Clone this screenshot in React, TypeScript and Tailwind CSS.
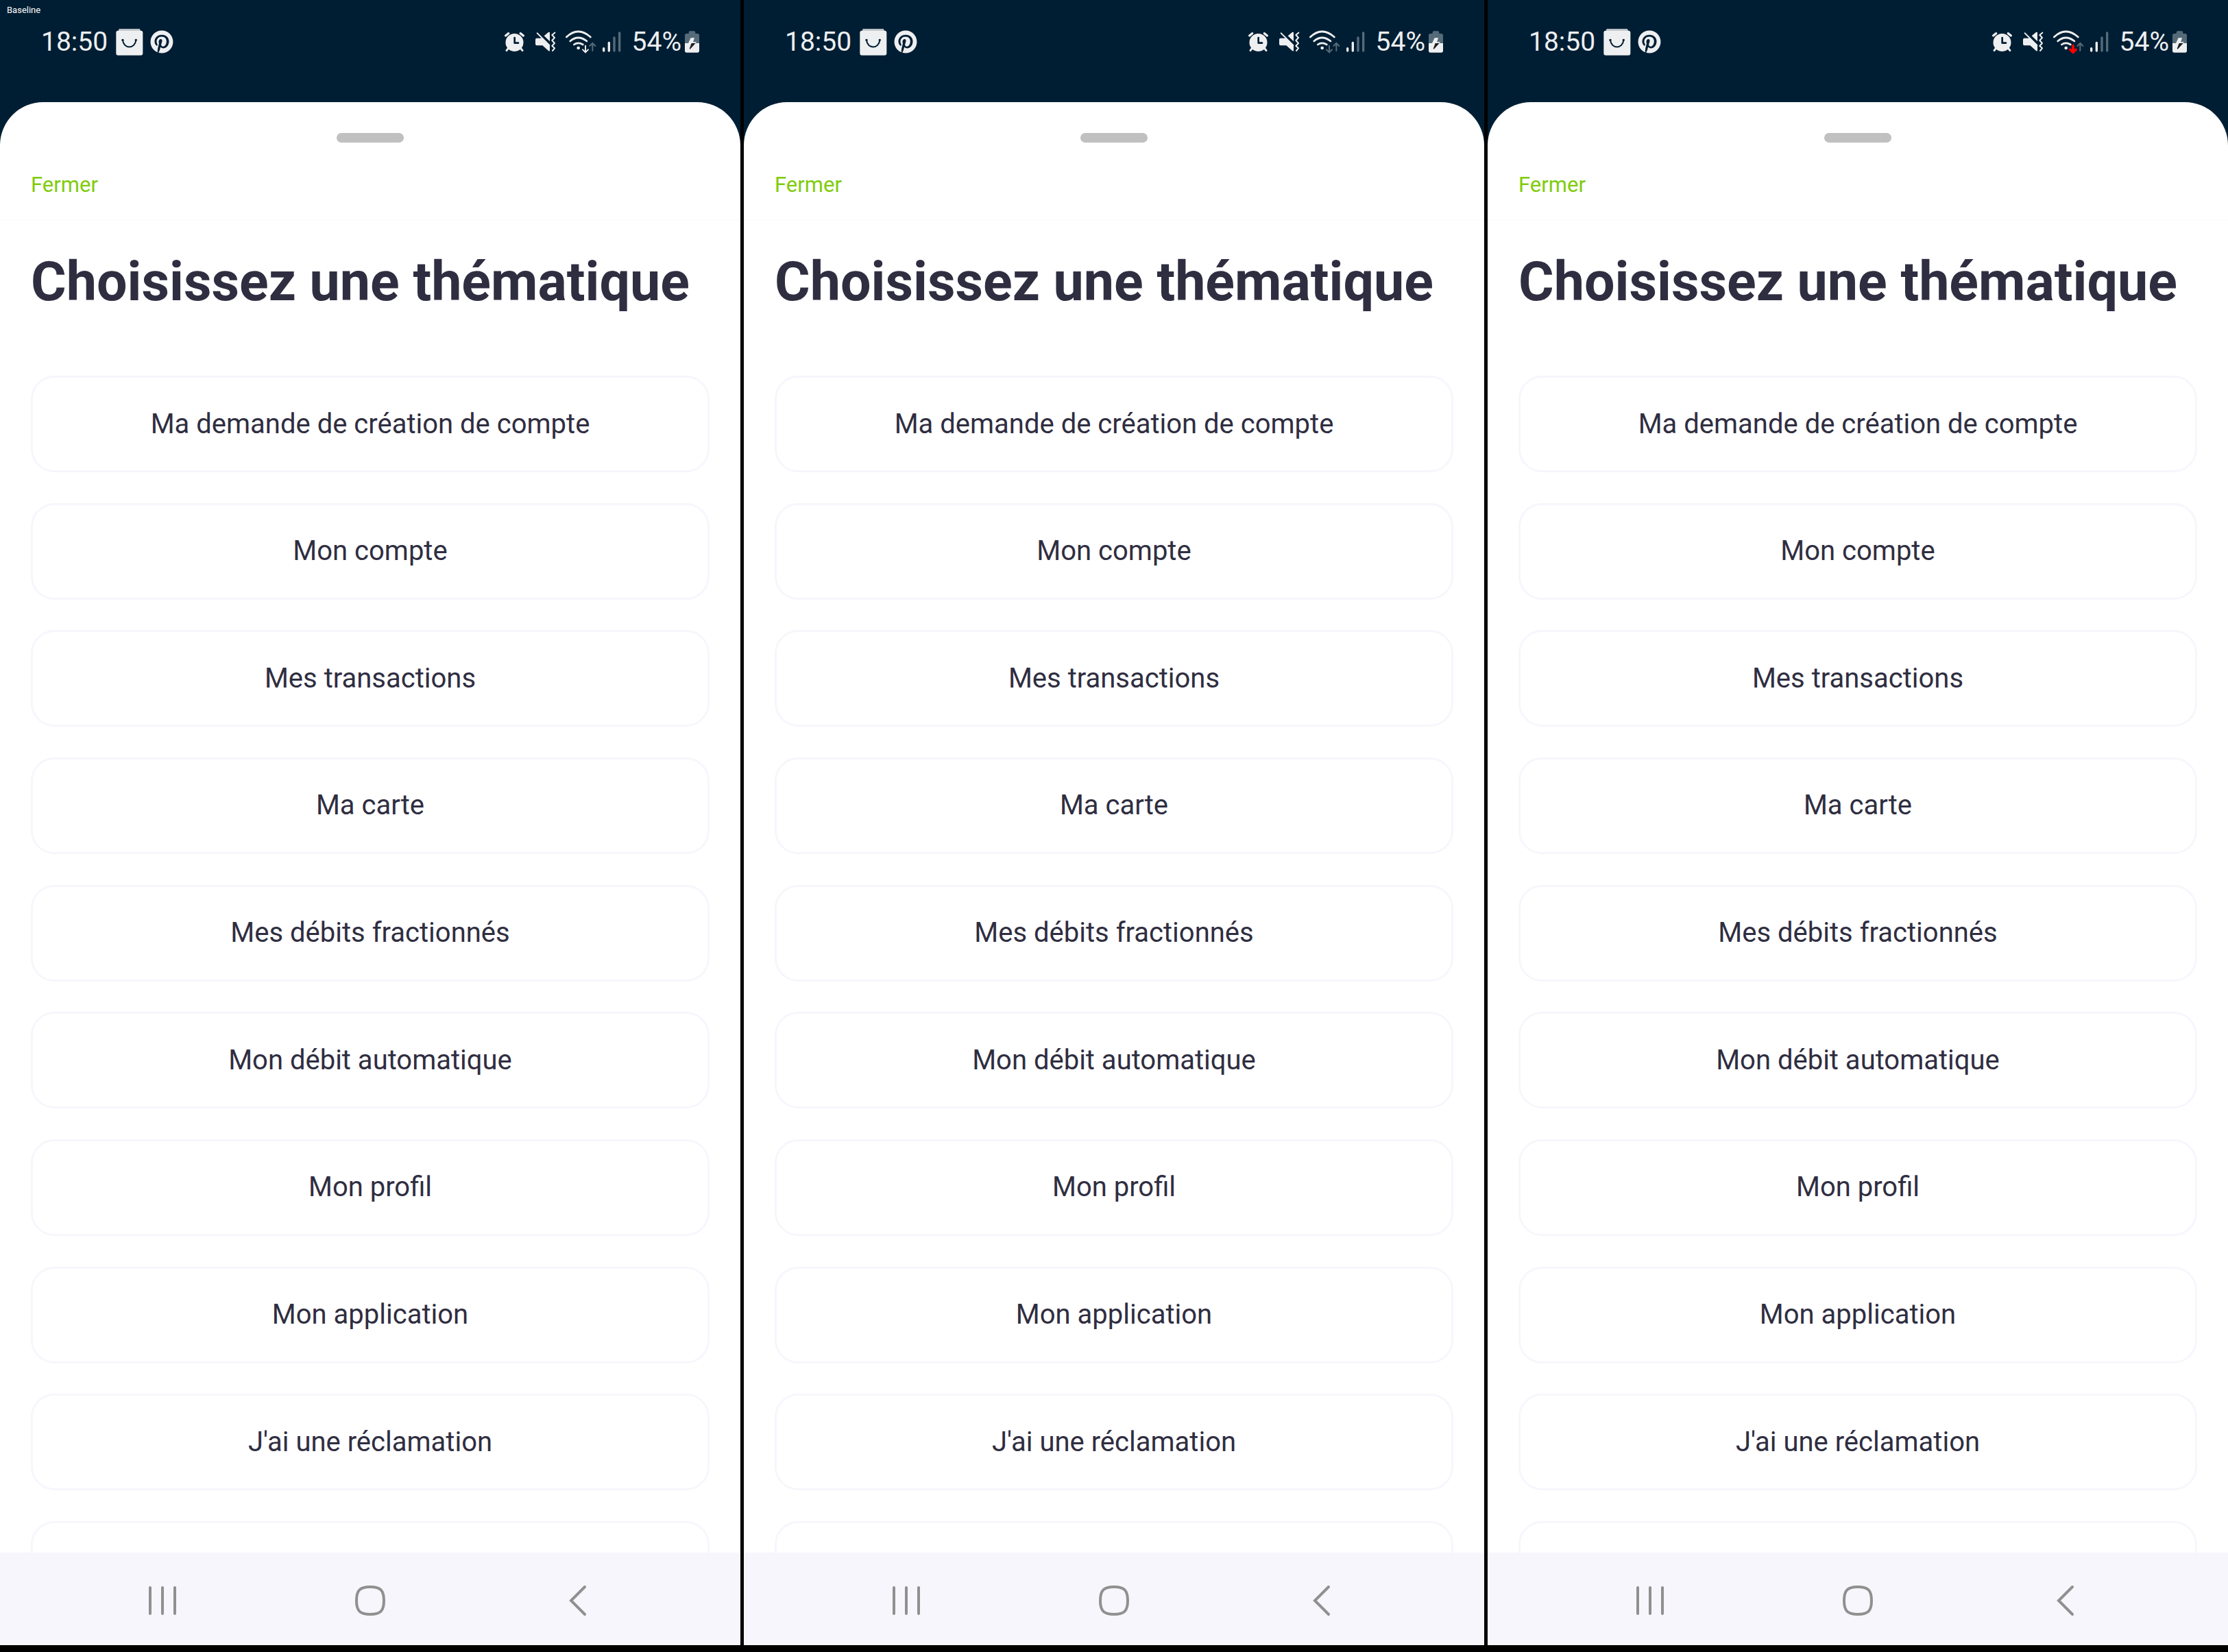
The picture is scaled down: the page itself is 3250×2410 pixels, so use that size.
import { FaPinterest } from "react-icons/fa";

const TOPICS = [
  "Ma demande de création de compte",
  "Mon compte",
  "Mes transactions",
  "Ma carte",
  "Mes débits fractionnés",
  "Mon débit automatique",
  "Mon profil",
  "Mon application",
  "J'ai une réclamation",
  "",
];

const INK = "#eeeff1";
const DIM = "#566b79";
const NAVY = "#001e33";

function BagIcon() {
  return (
    <svg className="h-10 w-10" viewBox="0 0 120 120" aria-hidden="true">
      <path d="M10 14 L14 3 H104 L110 14Z" fill="#b9c0c6" />
      <rect x="1" y="11" width="117" height="108" rx="9" fill={INK} />
      <path d="M30 53 C34 92 84 92 88 53" fill="none" stroke={NAVY} strokeWidth="6" />
      <circle cx="30" cy="52" r="5" fill={NAVY} />
      <circle cx="88" cy="52" r="5" fill={NAVY} />
    </svg>
  );
}

function AlarmIcon() {
  return (
    <svg className="h-[30px] w-[31px]" viewBox="45 48 93 90" fill="none" stroke={INK} strokeLinecap="round" aria-hidden="true">
      <circle cx="91.5" cy="96" r="39" fill={INK} stroke="none" />
      <path d="M64 122 L57 131 M119 122 L126 131" strokeWidth="9" />
      <path d="M53 66 L65 56 M118 56 L130 66" strokeWidth="10" />
      <path d="M92 75 V98 H108" stroke={NAVY} strokeWidth="8" strokeLinejoin="round" />
    </svg>
  );
}

function MuteIcon() {
  return (
    <svg className="h-[30px] w-[31px]" viewBox="180 48 93 90" aria-hidden="true">
      <path d="M189 77 H212 L246 110 V131 Q245 136 240 132 L214 109 H189 Q183 109 183 103 V83 Q183 77 189 77Z" fill={INK} />
      <path d="M221 67 L240 51 Q246 48 246 54 V91Z" fill={INK} />
      <path d="M191 55 L244 108" stroke={INK} strokeWidth="6" strokeLinecap="round" />
      <path d="M268 53 L256 63 L267 75 L256 87 L267 99 L256 111 L267 121 L258 132" fill="none" stroke={INK} strokeWidth="6" strokeLinecap="round" strokeLinejoin="round" />
    </svg>
  );
}

function WifiIcon({ down }: { down: string }) {
  const bold = down === "#ff0000";
  return (
    <svg className="h-[34px] w-[46px]" viewBox="312 40 138 102" fill="none" stroke={INK} strokeLinecap="round" aria-hidden="true">
      <path d="M319 70 Q370 22 424 70" strokeWidth="8" />
      <path d="M335 88 Q370 58 408 88" strokeWidth="8" />
      <path d="M352 103 Q370 90 391 103" strokeWidth="8" />
      <circle cx="371" cy="118" r="7" fill={INK} stroke="none" />
      <path d="M402 108 V135 M390 125 L402 137 L414 125" stroke={down} strokeWidth={bold ? 11 : 6} />
      <path d="M433 130 V98 M421 109 L433 97 L445 109" stroke={DIM} strokeWidth="6" />
    </svg>
  );
}

function SignalIcon() {
  return (
    <svg className="h-[30px] w-7" viewBox="475 46 84 90" strokeWidth="10" strokeLinecap="round" aria-hidden="true">
      <path d="M483 120 V130 M506 95 V130" stroke={INK} />
      <path d="M529 73 V130 M552 52 V130" stroke={DIM} />
    </svg>
  );
}

function BatteryIcon() {
  return (
    <svg className="h-8 w-[21px]" viewBox="837 42 63 96" aria-hidden="true">
      <path d="M854 50 Q854 43 860 43 H877 Q883 43 883 50 V54 H892 Q900 54 900 62 V97 H837 V62 Q837 54 845 54 H854Z" fill={DIM} />
      <path d="M837 96 H900 V129 Q900 137 892 137 H845 Q837 137 837 129Z" fill={INK} />
      <path d="M863 73 H879 L873 91 H887 L884 96 H852Z" fill={INK} />
      <path d="M866 96 H884 L860 122 L857 120Z" fill="#1d1d1d" />
    </svg>
  );
}

function Phone({ down, tag }: { down: string; tag?: string }) {
  return (
    <section className="flex min-w-0 flex-1 flex-col bg-[#001e33]">
      <header className="relative flex h-[149px] items-start justify-between px-[60px] pt-[41px] text-[39px] leading-[40px] text-[#eeeff1]">
        {tag && <span className="absolute top-2 left-[10px] text-[13px] leading-[14px] text-white">{tag}</span>}
        <div className="flex items-center">
          <time>18:50</time>
          <span className="ml-3"><BagIcon /></span>
          <FaPinterest className="ml-[10px] size-[34px]" />
        </div>
        <div className="flex h-10 items-center">
          <AlarmIcon />
          <span className="ml-[14px]"><MuteIcon /></span>
          <span className="ml-[13px]"><WifiIcon down={down} /></span>
          <span className="ml-2"><SignalIcon /></span>
          <span className="ml-4">54%</span>
          <span className="ml-[5px]"><BatteryIcon /></span>
        </div>
      </header>
      <main className="flex min-h-0 flex-1 flex-col overflow-hidden rounded-t-[63px] bg-white">
        <div className="flex h-[172px] shrink-0 flex-col border-b border-[#fafafa] px-[45px] pt-[45px]">
          <div className="h-[14px] w-[98px] self-center rounded-full bg-[#c0c0c0]" />
          <button type="button" className="mt-11 self-start text-[31px] leading-[36px] text-[#80cc0c]">Fermer</button>
        </div>
        <div className="min-h-0 flex-1 overflow-hidden px-[45px] pt-11">
          <h1 className="text-[79px] leading-[92px] font-bold whitespace-nowrap text-[#2f2e41]">Choisissez une thématique</h1>
          <ul className="mt-[91px] flex h-[1812px] flex-col justify-between">
            {TOPICS.map((t, i) => (
              <li key={i}>
                <button type="button" aria-label={t || "Autre"} className="block h-[141px] w-full rounded-[34px] border-[3px] border-[#f7f6fc] text-center text-[40px] leading-[48px] text-[#2f2e41]">
                  {t}
                </button>
              </li>
            ))}
          </ul>
        </div>
      </main>
      <nav className="grid h-[135px] shrink-0 grid-cols-3 bg-[#f7f6fc] px-[86px] pt-1">
        <button type="button" aria-label="Applications récentes" className="flex items-center justify-center">
          <svg className="size-12" viewBox="0 0 48 48" stroke="#909090" strokeWidth="4" strokeLinecap="round">
            <path d="M6 5 V43 M24 5 V43 M42 5 V43" />
          </svg>
        </button>
        <button type="button" aria-label="Accueil" className="flex items-center justify-center">
          <svg className="size-12" viewBox="0 0 48 48" fill="none" stroke="#909090" strokeWidth="4">
            <path d="M24 4 C39 4 44 9 44 24 C44 39 39 44 24 44 C9 44 4 39 4 24 C4 9 9 4 24 4Z" />
          </svg>
        </button>
        <button type="button" aria-label="Retour" className="flex items-center justify-center">
          <svg className="size-12" viewBox="0 0 48 48" fill="none" stroke="#909090" strokeWidth="4" strokeLinecap="round">
            <path d="M34 4 L14 24 L34 44" />
          </svg>
        </button>
      </nav>
    </section>
  );
}

export default function App() {
  return (
    <div className="flex h-screen gap-[5px] overflow-hidden bg-black pb-[10px] font-[Roboto,sans-serif]">
      <Phone down="#eeeff1" tag="Baseline" />
      <Phone down="#566b79" />
      <Phone down="#ff0000" />
    </div>
  );
}
